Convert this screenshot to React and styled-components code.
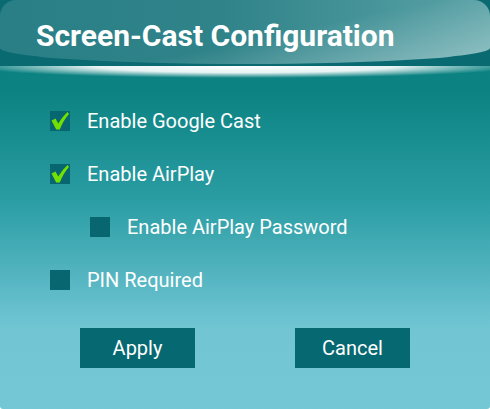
import styled, { createGlobalStyle } from "styled-components";

const Global = createGlobalStyle`
  html, body { margin: 0; padding: 0; background: #ffffff; }
  body { font-family: Roboto, "Noto Sans", sans-serif; }
`;

const Dialog = styled.div`
  width: 490px;
  height: 409px;
  display: flex;
  flex-direction: column;
  border-radius: 0 0 3px 3px;
  overflow: hidden;
  background: linear-gradient(
    180deg,
    #0a7f80 0px,
    #0c8282 90px,
    #2a9da3 200px,
    #5cb9c6 290px,
    #72c6d4 330px,
    #74c8d6 409px
  );
`;

const Header = styled.div`
  height: 66px;
  flex: none;
  background: #0a6a71;
`;

const Cap = styled.div`
  height: 64px;
  border-radius: 16px 16px 50% 50% / 16px 16px 16px 16px;
  background:
    linear-gradient(168deg, rgba(255,255,255,0) 55%, rgba(255,255,255,0.35) 100%),
    linear-gradient(90deg, #2a7f86 0%, #2f8389 45%, #4a979c 80%, #5aa2a6 100%);
  display: flex;
  align-items: center;
  padding: 8px 0 0 36px;
  box-sizing: border-box;
`;

const Title = styled.h1`
  margin: 0;
  color: #ffffff;
  font-family: Roboto, "Noto Sans", sans-serif;
  font-weight: 700;
  font-size: 30px;
  line-height: 1;
`;

const Glow = styled.div`
  height: 12px;
  flex: none;
  background: radial-gradient(
    56% 100% at 50% 0%,
    rgba(255, 255, 255, 1) 0%,
    rgba(255, 255, 255, 0.9) 55%,
    rgba(255, 255, 255, 0) 100%
  );
`;

const Options = styled.div`
  display: flex;
  flex-direction: column;
  gap: 33px;
  padding: 33px 0 0 50px;
`;

const Row = styled.label`
  display: flex;
  align-items: center;
  gap: 17px;
  height: 20px;
  margin-left: ${(p) => (p.$sub ? "40px" : "0")};
  color: #ffffff;
  font-size: 20px;
  font-family: Roboto, "Noto Sans", sans-serif;
`;

const Box = styled.span`
  width: 20px;
  height: 20px;
  flex: none;
  background: #07666f;
  display: flex;
  align-items: center;
  justify-content: center;
`;

const Buttons = styled.div`
  display: flex;
  gap: 100px;
  padding: 38px 0 0 80px;
`;

const Button = styled.button`
  width: 115px;
  height: 40px;
  border: none;
  border-radius: 0;
  background: #066870;
  color: #ffffff;
  font-family: Roboto, "Noto Sans", sans-serif;
  font-size: 20px;
  padding: 0;
  cursor: pointer;
`;

const Check = () => (
  <svg width="20" height="20" viewBox="0 0 20 20">
    <path
      d="M1.5 9.5 L5.5 7.5 L8.2 12.5 Q12 6 17.5 1 L19 3 Q13.5 9 9.8 18.5 L6.2 18.5 Z"
      fill="#72e000"
    />
  </svg>
);

const options = [
  { label: "Enable Google Cast", checked: true },
  { label: "Enable AirPlay", checked: true },
  { label: "Enable AirPlay Password", checked: false, sub: true },
  { label: "PIN Required", checked: false },
];

export default function App() {
  return (
    <>
      <Global />
      <Dialog>
        <Header>
          <Cap>
            <Title>Screen-Cast Configuration</Title>
          </Cap>
        </Header>
        <Glow />
        <Options>
          {options.map((o) => (
            <Row key={o.label} $sub={o.sub}>
              <Box>{o.checked && <Check />}</Box>
              {o.label}
            </Row>
          ))}
        </Options>
        <Buttons>
          <Button>Apply</Button>
          <Button>Cancel</Button>
        </Buttons>
      </Dialog>
    </>
  );
}
